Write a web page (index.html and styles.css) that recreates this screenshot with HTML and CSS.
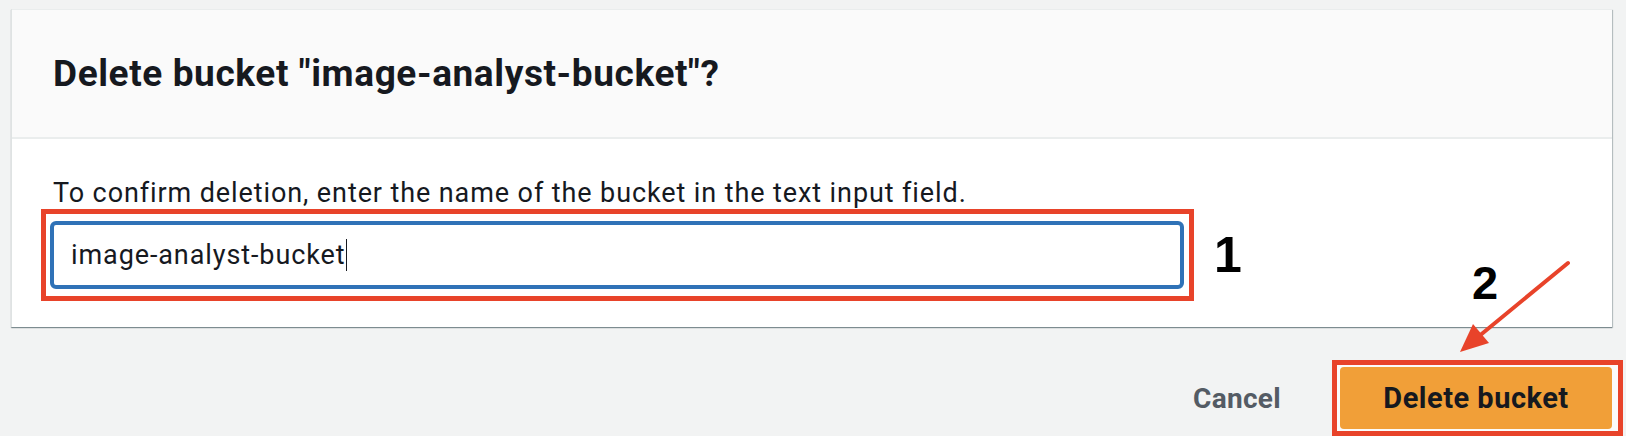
FILE: index.html
```html
<!DOCTYPE html>
<html lang="en">
<head>
<meta charset="utf-8">
<title>Delete bucket</title>
<link rel="stylesheet" href="styles.css">
</head>
<body>
<div class="page">
  <section class="card">
    <header class="card-header">
      <h2 class="title">Delete bucket "image-analyst-bucket"?</h2>
    </header>
    <div class="card-body">
      <p class="hint">To confirm deletion, enter the name of the bucket in the text input field.</p>
      <div class="field-row">
        <div class="mark mark-input">
          <div class="text-input">image-analyst-bucket<span class="caret"></span></div>
        </div>
        <span class="step step-1">1</span>
      </div>
    </div>
  </section>
  <footer class="actions">
    <span class="btn-link">Cancel</span>
    <div class="mark mark-button">
      <span class="btn-primary">Delete bucket</span>
    </div>
  </footer>
</div>
<span class="step step-2">2</span>
<svg class="arrow" width="1626" height="436" viewBox="0 0 1626 436" aria-hidden="true">
  <line x1="1568" y1="263" x2="1478" y2="337" stroke="#e8432a" stroke-width="4" stroke-linecap="round"/>
  <polygon points="1460,352 1489,343 1473,324" fill="#e8432a"/>
</svg>
</body>
</html>
```
FILE: styles.css
```css
html, body {
  margin: 0;
  padding: 0;
}
body {
  width: 1626px;
  height: 436px;
  background: #f2f3f3;
  font-family: Roboto, "Noto Sans", sans-serif;
  color: #16191f;
  position: relative;
  overflow: hidden;
}
.page {
  padding: 9px 3px 0 11px;
}
.card {
  width: 1601px;
  background: #ffffff;
  border-left: 1px solid #dfe3e3;
  box-sizing: border-box;
  box-shadow: 0 1px 1px 0 rgba(0, 28, 36, 0.35), 1px 1px 1px 0 rgba(0, 28, 36, 0.2);
}
.card-header {
  height: 127px;
  background: #fafafa;
  border-top: 1px solid #eaeded;
  border-bottom: 2px solid #eaeded;
  box-sizing: content-box;
  display: flex;
  align-items: center;
  padding-left: 41px;
}
.title {
  margin: 0;
  font-size: 37px;
  font-weight: 700;
  letter-spacing: 0.6px;
  color: #16191f;
}
.card-body {
  padding: 38px 0 26px 38px;
}
.hint {
  margin: 0;
  font-size: 27px;
  line-height: 32px;
  letter-spacing: 0.9px;
  color: #16191f;
  padding-left: 3px;
}
.field-row {
  display: flex;
  align-items: center;
}
.mark {
  border: 5px solid #e8432a;
  background: #ffffff;
}
.mark-input {
  margin-left: -9px;
  padding: 7px 5px 7px 4px;
}
.text-input {
  width: 1134px;
  height: 68px;
  box-sizing: border-box;
  border: 4px solid #2f72b7;
  border-radius: 6px;
  padding-left: 17px;
  display: flex;
  align-items: center;
  font-size: 27px;
  letter-spacing: 0.9px;
  color: #16191f;
}
.caret {
  display: inline-block;
  width: 1px;
  height: 32px;
  background: #16191f;
  margin-left: 1px;
}
.step {
  font-family: "Liberation Sans", Arial, sans-serif;
  font-weight: 700;
  color: #000000;
}
.step-1 {
  font-size: 50px;
  margin-left: 20px;
}
.step-2 {
  position: absolute;
  left: 1472px;
  top: 258px;
  font-size: 47px;
  line-height: 50px;
}
.arrow {
  position: absolute;
  left: 0;
  top: 0;
  pointer-events: none;
}
.actions {
  margin-top: 33px;
  display: flex;
  justify-content: flex-end;
  align-items: center;
}
.btn-link {
  font-size: 28px;
  font-weight: 700;
  letter-spacing: 0.3px;
  color: #545b64;
  margin-right: 51px;
}
.mark-button {
  padding: 2px 6px 2px 3px;
  background: #fbfbfb;
}
.btn-primary {
  display: flex;
  align-items: center;
  justify-content: center;
  width: 272px;
  height: 62px;
  border-radius: 4px;
  background: #f19f38;
  font-size: 29px;
  font-weight: 700;
  letter-spacing: 0.5px;
  color: #16191f;
}
```
